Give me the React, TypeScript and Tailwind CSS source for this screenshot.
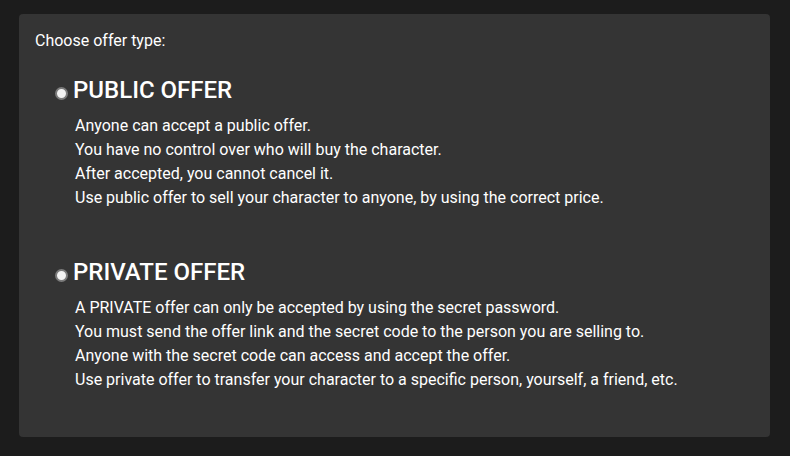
import React from 'react';

const offers = [
  {
    title: 'PUBLIC OFFER',
    lines: [
      'Anyone can accept a public offer.',
      'You have no control over who will buy the character.',
      'After accepted, you cannot cancel it.',
      'Use public offer to sell your character to anyone, by using the correct price.',
    ],
  },
  {
    title: 'PRIVATE OFFER',
    lines: [
      'A PRIVATE offer can only be accepted by using the secret password.',
      'You must send the offer link and the secret code to the person you are selling to.',
      'Anyone with the secret code can access and accept the offer.',
      'Use private offer to transfer your character to a specific person, yourself, a friend, etc.',
    ],
  },
];

const App: React.FC = () => {
  return (
    <div className="min-h-[456px] w-[790px] bg-[#1c1c1c] pt-[14px] font-['Roboto',sans-serif] text-white">
      <div className="mx-[19px] w-[751px] rounded-[4px] bg-[#343434] px-4 pt-[32px] pb-[45px]">
        <p className="text-[16px] leading-[20px] -mt-[15px]">Choose offer type:</p>

        {offers.map((offer, i) => (
          <div key={offer.title} className={i === 0 ? 'mt-[25px]' : 'mt-[48px]'}>
            <label className="ml-[20px] flex items-center gap-[5px]">
              <span className="mt-[6px] h-[13px] w-[13px] rounded-full border-2 border-[#7b7b7b] bg-[#f2f2f2]"></span>
              <span className="text-[24px] font-medium leading-[28px]">{offer.title}</span>
            </label>
            <div className="ml-[40px] mt-[10px] text-[16px] leading-[24px]">
              {offer.lines.map((line) => (
                <div key={line}>{line}</div>
              ))}
            </div>
          </div>
        ))}
      </div>
    </div>
  );
};

export default App;
